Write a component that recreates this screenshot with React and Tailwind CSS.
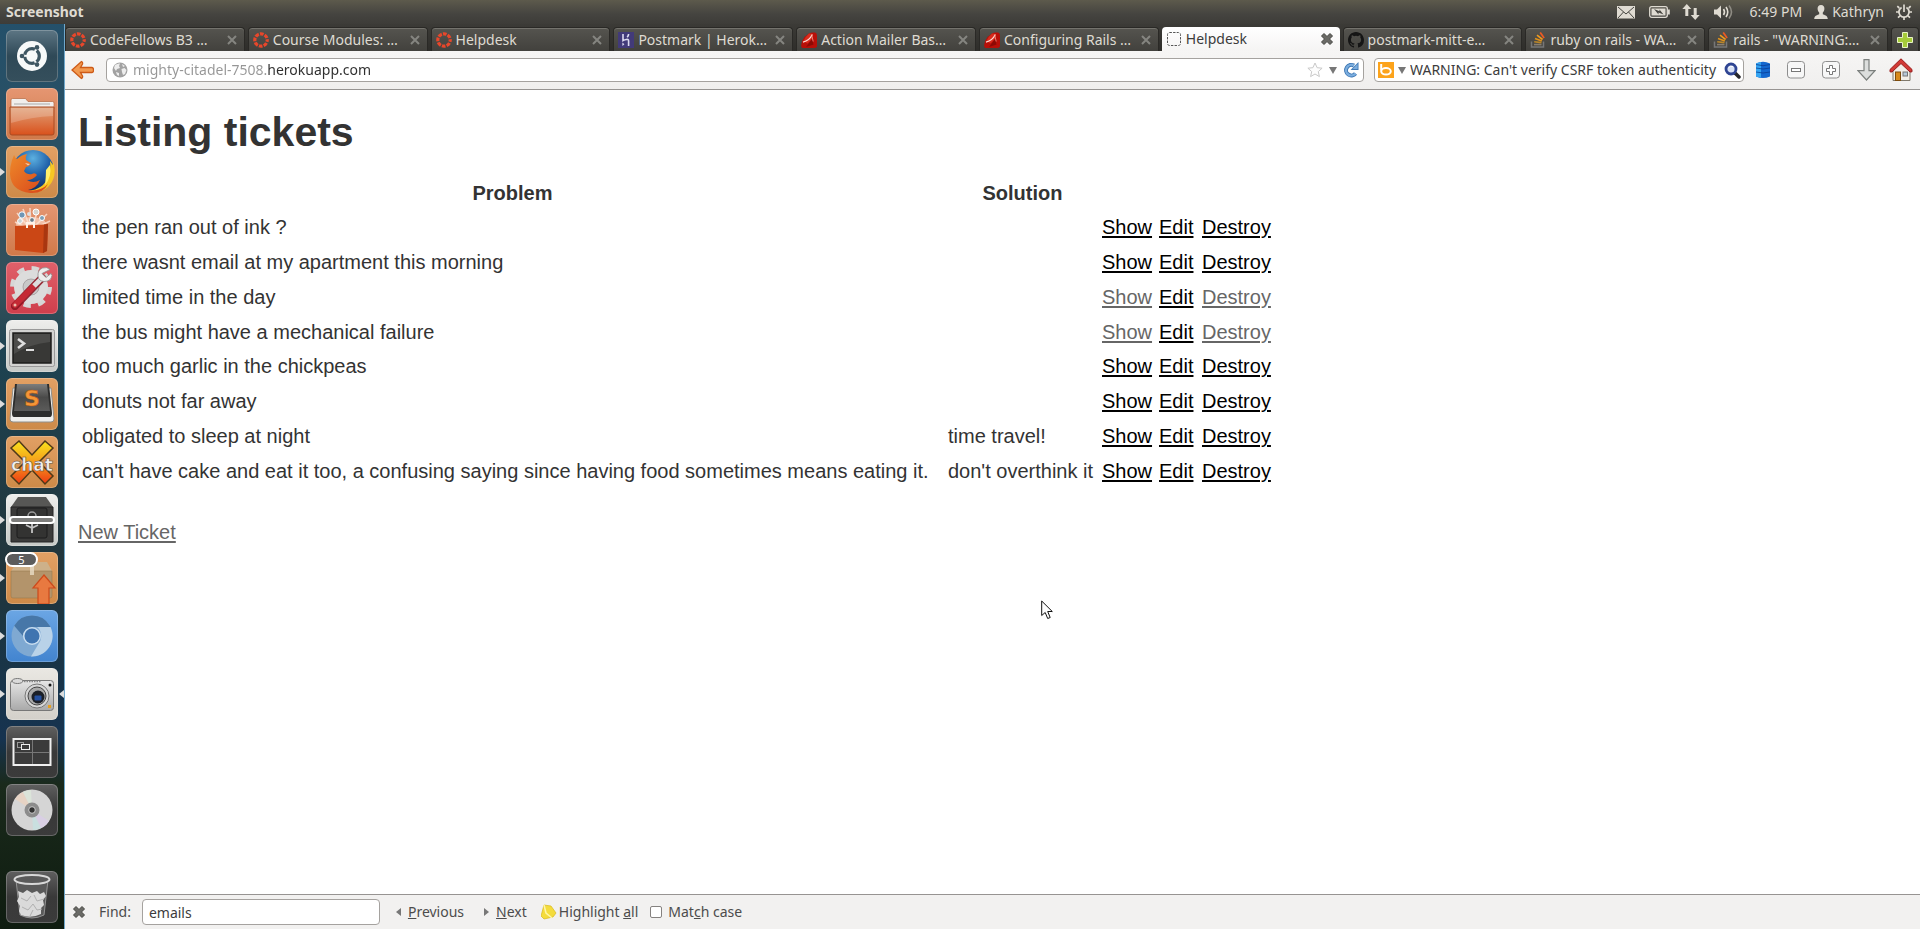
import React from "react";

const TICKETS = [
  { problem: "the pen ran out of ink ?", solution: "" },
  { problem: "there wasnt email at my apartment this morning", solution: "" },
  { problem: "limited time in the day", solution: "", visited: true },
  { problem: "the bus might have a mechanical failure", solution: "", visited: true },
  { problem: "too much garlic in the chickpeas", solution: "" },
  { problem: "donuts not far away", solution: "" },
  { problem: "obligated to sleep at night", solution: "time travel!" },
  {
    problem:
      "can't have cake and eat it too, a confusing saying since having food sometimes means eating it.",
    solution: "don't overthink it",
  },
];

/* ---------- tab icons ---------- */

function CanvasIcon() {
  return (
    <svg viewBox="0 0 16 16" className="size-4 shrink-0" aria-hidden="true">
      <circle cx="8" cy="8" r="6.2" fill="none" stroke="#e8472b" strokeWidth="3.2" strokeDasharray="3.7 1.17" strokeDashoffset="1.8" />
    </svg>
  );
}

function HerokuIcon() {
  return (
    <svg viewBox="0 0 16 16" className="size-4 shrink-0" aria-hidden="true">
      <rect width="16" height="16" fill="#423a79" />
      <path d="M5 2v6.600c1.400-.7 5.600-2.400 5.600.2V14M10.600 2c0 1.400-.7 2.400-1.400 3.200" fill="none" stroke="#dcdaf0" strokeWidth="1.600" />
      <path d="M4.400 10.500l2 1.700-2 1.700z" fill="#dcdaf0" />
    </svg>
  );
}

function RubyIcon() {
  return (
    <svg viewBox="0 0 16 16" className="size-4 shrink-0" aria-hidden="true">
      <path d="M8 1.500Q10 0 14 .5q2 .5 2 3v11q-1 1.500-3 1.500H2Q0 16 .2 13 1 8 3.500 5z" fill="#b80f08" />
      <path d="M8 1.500Q4 5 2.500 9l4 2.500 5-5 .5-4.500z" fill="#d92b1c" />
      <path d="M5 15l6-8 1.500 5.500z" fill="#8c0a05" />
      <path d="M2 10.200Q8.500 8.500 11.300 2.500" fill="none" stroke="#ffd9d3" strokeWidth="1.200" />
      <path d="M10.800 3.500l1.400 6" fill="none" stroke="#f0958a" strokeWidth=".8" />
    </svg>
  );
}

function BlankIcon() {
  return (
    <svg viewBox="0 0 16 16" className="size-4 shrink-0" aria-hidden="true">
      <rect x="1.500" y="1.500" width="13" height="13" rx="2" fill="none" stroke="#555" strokeDasharray="2.400 1.200" />
    </svg>
  );
}

function GithubIcon() {
  return (
    <svg viewBox="0 0 16 16" className="size-4 shrink-0" aria-hidden="true">
      <path
        fill="#151515"
        d="M8 0C3.580 0 0 3.580 0 8c0 3.540 2.290 6.530 5.470 7.590.4.070.55-.17.55-.38 0-.19-.01-.82-.01-1.490-2.010.37-2.530-.49-2.690-.94-.09-.23-.48-.94-.82-1.130-.28-.15-.68-.52-.01-.53.63-.01 1.080.58 1.230.82.72 1.210 1.870.87 2.330.66.070-.52.28-.87.51-1.070-1.780-.2-3.640-.89-3.640-3.950 0-.87.31-1.590.82-2.150-.08-.2-.36-1.020.08-2.120 0 0 .67-.21 2.200.82a7.600 7.600 0 0 1 4 0c1.530-1.040 2.200-.82 2.200-.82.44 1.100.16 1.920.08 2.120.51.56.82 1.270.82 2.150 0 3.070-1.870 3.750-3.650 3.950.29.25.54.73.54 1.480 0 1.070-.01 1.930-.01 2.200 0 .21.15.46.55.38A8.010 8.010 0 0 0 16 8c0-4.420-3.580-8-8-8z"
      />
    </svg>
  );
}

function StackIcon() {
  return (
    <svg viewBox="0 0 16 16" className="size-4 shrink-0" aria-hidden="true">
      <path d="M1.500 9.500v5.500h12V9.500" fill="none" stroke="#777" strokeWidth="1.500" />
      <path d="M4 12.600h7.500" stroke="#8a7f70" strokeWidth="1.600" />
      <path d="M4.200 9.700l7.300.9" stroke="#b8862a" strokeWidth="1.600" />
      <path d="M5 6.500l6.800 2.600" stroke="#e0921b" strokeWidth="1.600" />
      <path d="M7 3.200l5.600 4.300" stroke="#f09a1c" strokeWidth="1.600" />
      <path d="M10.200.4l3.900 5.700" stroke="#ee5a22" strokeWidth="1.700" />
    </svg>
  );
}

function CrossIcon({ color }) {
  return (
    <svg viewBox="0 0 12 12" className="size-3" aria-hidden="true">
      <path d="M2 2l8 8M10 2l-8 8" stroke={color} strokeWidth="2" />
    </svg>
  );
}

function HeavyCrossIcon() {
  return (
    <svg viewBox="0 0 14 14" className="size-3.5" aria-hidden="true">
      <path d="M4 1.500l3 3 3-3L12.500 4l-3 3 3 3L10 12.500l-3-3-3 3L1.500 10l3-3-3-3z" fill="#6a6a66" stroke="#444440" strokeWidth="1" />
    </svg>
  );
}

const TABS = [
  { icon: CanvasIcon, title: "CodeFellows B3 …" },
  { icon: CanvasIcon, title: "Course Modules: …" },
  { icon: CanvasIcon, title: "Helpdesk" },
  { icon: HerokuIcon, title: "Postmark | Herok…" },
  { icon: RubyIcon, title: "Action Mailer Bas…" },
  { icon: RubyIcon, title: "Configuring Rails …" },
  { icon: BlankIcon, title: "Helpdesk", active: true },
  { icon: GithubIcon, title: "postmark-mitt-e…" },
  { icon: StackIcon, title: "ruby on rails - WA…" },
  { icon: StackIcon, title: 'rails - "WARNING:…' },
];

function Tab({ icon: Icon, title, active }) {
  return (
    <div
      className={
        active
          ? "flex h-6 min-w-0 flex-1 items-center rounded-t bg-linear-to-b from-white to-[#f5f4f3] pr-1.5 pl-1 text-[#3c3c3c]"
          : "flex h-6 min-w-0 flex-1 items-center rounded-t border border-b-0 border-[#2a2926] bg-linear-to-b from-[#55544f] to-[#42413d] pr-1.5 pl-1 text-[#dfdbd2] shadow-[inset_0_1px_0_#74736d]"
      }
    >
      <button type="button" role="tab" aria-selected={!!active} className="flex min-w-0 flex-1 items-center gap-1">
        <Icon />
        <span className="overflow-hidden whitespace-nowrap">{title}</span>
      </button>
      <button type="button" aria-label={"Close " + title} className="shrink-0">
        {active ? <HeavyCrossIcon /> : <CrossIcon color="#858580" />}
      </button>
    </div>
  );
}

/* ---------- top panel ---------- */

function TopPanel() {
  return (
    <header className="flex h-7 items-start justify-between bg-linear-to-b from-[#5d5a4c] via-[#454440] to-[#3a3935] text-sm text-[#dfdbd2]">
      <span className="h-6 pl-1.5 leading-6 font-bold">Screenshot</span>
      <div className="flex h-6 items-center pr-2">
        <svg viewBox="0 0 18 14" className="mr-3.5 h-3.5 w-[18px]" aria-hidden="true">
          <rect y="1" width="18" height="12.500" fill="#dfdbd2" />
          <path d="M1 2l8 7 8-7M1 13l5.500-6M17 13l-5.500-6" fill="none" stroke="#45443f" strokeWidth="1" />
        </svg>
        <svg viewBox="0 0 21 14" className="mr-3 h-3.5 w-[21px]" aria-hidden="true">
          <rect x=".7" y="1.700" width="17.600" height="10.600" rx="2" fill="none" stroke="#dfdbd2" strokeWidth="1.300" />
          <rect x="2.500" y="3.500" width="14" height="7" fill="#dfdbd2" />
          <path d="M19 4.500h1.800v5H19z" fill="#dfdbd2" />
          <path d="M5 4l5.500 2.300V4.500l4 5-5-2v2z" fill="#45443f" />
        </svg>
        <svg viewBox="0 0 18 18" className="mr-3.5 size-[18px]" aria-hidden="true">
          <path d="M4.800 1l4.500 5H6.300v7H3.300V6H.3zM13.200 17l-4.500-5h3V5h3v7h3z" fill="#dfdbd2" />
        </svg>
        <svg viewBox="0 0 20 16" className="mr-4 h-4 w-5" aria-hidden="true">
          <path d="M0 5.500h3l4-4v13l-4-4H0z" fill="#dfdbd2" />
          <path d="M9.500 5q2 3 0 6M12 3q3.500 5 0 10" fill="none" stroke="#dfdbd2" strokeWidth="1.600" />
          <path d="M15 1.500q5 6.500 0 13" fill="none" stroke="#8f8c84" strokeWidth="1.600" />
        </svg>
        <time className="mr-3">6:49 PM</time>
        <svg viewBox="0 0 14 14" className="mr-1 size-3.5" aria-hidden="true">
          <path d="M7 0c2.500 0 3.600 1.700 3.400 4-.2 1.800-1 2.800-1.600 3.600v1.600c1.600.9 4.700 1 5 4.800H.2c.3-3.800 3.400-3.900 5-4.800V7.600C4.600 6.800 3.800 5.800 3.600 4 3.400 1.700 4.500 0 7 0z" fill="#dfdbd2" />
        </svg>
        <span className="mr-3">Kathryn</span>
        <svg viewBox="0 0 16 16" className="size-4" aria-hidden="true">
          <path d="M5.600 3.500a5.100 5.100 0 1 0 4.800 0" fill="none" stroke="#dfdbd2" strokeWidth="1.800" />
          <path d="M8 .5V8M1.300 2.200l2 1.800M14.700 2.200l-2 1.800M0 8h3M13 8h3M2 13.700l2-1.800M14 13.700l-2-1.800M8 13v3" stroke="#dfdbd2" strokeWidth="1.700" />
        </svg>
      </div>
    </header>
  );
}

/* ---------- launcher ---------- */

function UbuntuArt() {
  return (
    <>
      <circle cx="26" cy="26" r="15" fill="#f7f9f9" />
      <circle cx="26" cy="26" r="7.300" fill="none" stroke="#3e5662" strokeWidth="3.200" strokeDasharray="13.200 2.090" strokeDashoffset="6.600" />
      <circle cx="16" cy="26" r="2.300" fill="#3e5662" />
      <circle cx="31" cy="17.400" r="2.300" fill="#3e5662" />
      <circle cx="31" cy="34.600" r="2.300" fill="#3e5662" />
    </>
  );
}

function FilesArt() {
  return (
    <>
      <path d="M5 20v-8q0-1.500 1.500-1.500h13l2.500 3h24.500q1.500 0 1.500 1.500v6z" fill="#f1efed" stroke="#b5673f" strokeWidth=".7" />
      <path d="M8 16h36" stroke="#aaa" />
      <path d="M4 19h44v26q0 2-2 2H6q-2 0-2-2z" fill="url(#folder)" stroke="#a84a22" />
      <path d="M5 20h42v8Q25 29 5 35z" fill="#fff" opacity=".2" />
    </>
  );
}

function FirefoxArt() {
  return (
    <>
      <circle cx="27" cy="25" r="21" fill="url(#globe)" />
      <path d="M47 15q5 16-5 26-10 8-20 4 16-2 20-14 3-8 2-16l3 4z" fill="#f6c624" />
      <path d="M44 19q2 12-5 20 1-9 1-15z" fill="#fff06a" />
      <path d="M6 14q1-2 2-5 1 3 3 4 4-4 10-5-2 3-1 6 3 2 5 3-1 3-5 4l-2 4q3 4 8 3 3-2 5 1-4 5-10 5 6 4 13 0-3 8-12 10 12 2 20-6-5 10-18 9Q5 45 4 28q0-8 2-14z" fill="url(#fox)" />
      <path d="M19 17l5 1-2 1.500z" fill="#f4d0b0" />
    </>
  );
}

function SoftwareArt() {
  return (
    <>
      <path d="M25 26L11 9M25 26L17 5M25 26L24 4M25 26l7-20M25 26L41 10M25 26L9 18M25 26l19-9" stroke="#ffe6d8" strokeWidth="1.600" opacity=".75" />
      <ellipse cx="25" cy="20" rx="15" ry="7" fill="#ffe5d5" opacity=".6" />
      <circle cx="16" cy="11" r="3.200" fill="#6f96b5" stroke="#fff" />
      <circle cx="30" cy="8" r="3" fill="#d5d5cf" stroke="#fff" />
      <circle cx="23" cy="10" r="2" fill="#dfdfdf" />
      <circle cx="36" cy="14" r="2.500" fill="#7f9fb4" stroke="#fff" />
      <circle cx="14" cy="17" r="2.400" fill="#c8d0d0" stroke="#fff" />
      <circle cx="26" cy="16" r="2.400" fill="#697c86" stroke="#fff" />
      <path d="M9 22l29-1.500 4-.5-1 27-4 2-28-3z" fill="#cb4715" />
      <path d="M38 20.500l4-.5-1 27-4 2z" fill="#a93710" />
      <path d="M21 24v-5h7v5" fill="none" stroke="#fff1e6" strokeWidth="2" />
    </>
  );
}

function SettingsArt() {
  return (
    <>
      <circle cx="25" cy="25" r="18" fill="none" stroke="#d6d6d6" strokeWidth="6" strokeDasharray="7.070 7.070" />
      <circle cx="25" cy="25" r="12.500" fill="none" stroke="#dcdcdc" strokeWidth="9" />
      <circle cx="25" cy="25" r="8" fill="#c9c9c9" stroke="#a9a9a9" />
      <path d="M36 16L9 44" stroke="#8e1522" strokeWidth="8" strokeLinecap="round" opacity=".9" />
      <path d="M27 25L9 43" stroke="#c52a35" strokeWidth="6" strokeLinecap="round" />
      <path d="M28 24l8-8" stroke="#dcdcdc" strokeWidth="5" />
      <path d="M44 7.500q-3-3-7.500-1.500-5 2-4.500 8 .5 5 6 5.500 7 0 8-6l-1-2-5 4-4-4z" fill="#ededed" stroke="#8e8e8e" strokeWidth=".8" />
      <circle cx="9" cy="43" r="1.500" fill="#eba" />
    </>
  );
}

function TerminalArt() {
  return (
    <>
      <rect x="3.500" y="9.500" width="45" height="37" rx="2" fill="#d3d3d1" stroke="#999" />
      <rect x="7" y="13" width="38" height="30" fill="#383836" stroke="#1c1c1b" strokeWidth="1.500" />
      <path d="M8 14h36v8Q24 24 8 34z" fill="#fff" opacity=".1" />
      <path d="M12 19l6 4.500-6 4.500" fill="none" stroke="#dedede" strokeWidth="2.600" />
      <path d="M20 30h8" stroke="#dedede" strokeWidth="2" />
    </>
  );
}

function SublimeArt() {
  return (
    <>
      <path d="M7 10h38l3 31q0 3-3 3H7q-3 0-3-3z" fill="#efefed" stroke="#8f8f8b" />
      <path d="M9 6h34l3 29q0 4-2 4H8q-2 0-2-4z" fill="#2d2d2c" />
      <path d="M11 6h30l3 27H8z" fill="url(#key)" />
      <text x="26" y="28" textAnchor="middle" fontFamily="DejaVu Sans, sans-serif" fontWeight="bold" fontSize="22" fill="#f59537" stroke="#b95a10" strokeWidth=".5">
        S
      </text>
    </>
  );
}

function XChatArt() {
  return (
    <>
      <path d="M13 5l13 14L39 5l8 7-14 14 14 14-8 8-13-14-13 14-8-8 14-14L5 12z" fill="url(#xchat)" stroke="#4f3a18" strokeWidth="1.500" />
      <text x="26" y="35" textAnchor="middle" fontFamily="DejaVu Sans, sans-serif" fontWeight="bold" fontSize="17" fill="#efefef" stroke="#5a4630" strokeWidth=".5">
        chat
      </text>
    </>
  );
}

function SafeArt() {
  return (
    <>
      <path d="M12 3h28l7 10H5z" fill="#575755" />
      <path d="M5 13h42v35H5z" fill="#3b3b3a" stroke="#242424" />
      <rect x="11" y="14" width="30" height="30" rx="2" fill="#333332" stroke="#1c1c1c" />
      <circle cx="26" cy="22" r="4" fill="none" stroke="#9d9d9d" strokeWidth="1.500" />
      <path d="M26 30v9M20 31l6 3 6-3" fill="none" stroke="#c4c4c4" strokeWidth="1.800" />
      <rect x="4" y="23" width="44" height="6" rx="3" fill="#7d7d7b" stroke="#fff" strokeWidth="2" />
    </>
  );
}

function UpdaterArt() {
  return (
    <>
      <path d="M11 10h30l5 9H5z" fill="#cdb18a" />
      <path d="M5 19h41v25q0 2-2 2H7q-2 0-2-2z" fill="#b3946b" stroke="#98794f" strokeWidth=".6" />
      <path d="M24 10h4v13h-4z" fill="#e9dcc6" opacity=".8" />
      <path d="M38 23l11 13h-6v16H32V36h-5z" fill="#e87940" stroke="#cc4a1c" strokeWidth="1.200" />
    </>
  );
}

function ChromiumArt() {
  return (
    <>
      <circle cx="26" cy="26" r="20.500" fill="#7fa9d2" />
      <path d="M8.200 15.800A20.500 20.500 0 0 1 43.800 15.800L44.500 17H26a9 9 0 0 0-9 9z" fill="#4777a8" />
      <path d="M44.500 17A20.500 20.500 0 0 1 25 46.500L34.500 30.500Q37 22 31 17z" fill="#b9d2e8" />
      <circle cx="26" cy="26" r="9" fill="#c9ddef" />
      <circle cx="26" cy="26" r="7.500" fill="#3f74b0" />
    </>
  );
}

function CameraArt() {
  return (
    <>
      <rect x="4.500" y="12.500" width="43" height="30" rx="3" fill="url(#camera)" stroke="#777" />
      <ellipse cx="11.500" cy="13" rx="5.500" ry="2.500" fill="#dadada" stroke="#777" />
      <path d="M18 13.500h17" stroke="#888" strokeWidth="1.500" strokeDasharray="1.500 1" />
      <circle cx="44" cy="17" r="1.500" fill="#111" />
      <circle cx="31" cy="28" r="12" fill="#d6d6d6" stroke="#777" />
      <circle cx="31" cy="28" r="9" fill="#a8a8a8" stroke="#444" />
      <circle cx="32" cy="29" r="6.500" fill="#1b1f27" />
      <rect x="28.500" y="27.500" width="7" height="5" rx="1" fill="#244f9e" />
      <rect x="42" y="37" width="3" height="3" fill="#e8a020" />
    </>
  );
}

function WorkspaceArt() {
  return (
    <>
      <rect x="7.500" y="13" width="37" height="26" fill="#3b3b3b" stroke="#f0f0f0" strokeWidth="2" />
      <path d="M26.500 14v24M9 26.500h34" stroke="#777" />
      <rect x="11.500" y="16.500" width="6" height="5" fill="none" stroke="#999" />
      <rect x="15.500" y="18.500" width="8" height="5" fill="#3b3b3b" stroke="#eee" />
    </>
  );
}

function DiscArt() {
  return (
    <>
      <circle cx="26" cy="26" r="20.500" fill="#d5d5d5" />
      <path d="M26 26L9 15q3-5 8-7z" fill="#e6d3c4" />
      <path d="M26 26L17 8q4-2 8-2z" fill="#dbe4d9" />
      <path d="M26 26l17 11q-3 5-8 7z" fill="#d9cfe4" />
      <path d="M26 26l9 18q-4 2-8 2z" fill="#c9dfdf" />
      <circle cx="26" cy="26" r="7.500" fill="#8c8c8c" />
      <circle cx="26" cy="26" r="3.300" fill="#333" stroke="#ccc" strokeWidth="1" />
    </>
  );
}

function TrashArt() {
  return (
    <>
      <path d="M10 9l4 35q12 6 24 0l4-35z" fill="#5a5a5a" stroke="#a5a5a5" strokeWidth=".8" />
      <path d="M12 20l5 2 4-3 5 3 5-2 3 3 4-2 2 4-3 4 1 5-3 3v6q-10 5-20 1l-2-4 1-5-3-5 2-4z" fill="#dadada" />
      <path d="M15 27l6 3 4-5M28 24l3 6 7-2M16 36l6 3 5-6 4 6 5-1M24 45l3-6" fill="none" stroke="#b0b0b0" />
      <ellipse cx="26" cy="8.500" rx="17.500" ry="4.500" fill="#5a5a5a" stroke="#d8d8d8" strokeWidth="2" />
    </>
  );
}

const ORANGE = "bg-linear-to-b from-[#e59672] to-[#cf7949]";
const AMBER = "bg-linear-to-b from-[#e2a064] to-[#cd8a48]";
const PALE = "bg-linear-to-b from-[#eeeeec] to-[#c6c9c6]";
const DARK = "bg-linear-to-b from-[#606060] via-[#393939] to-[#3b3b3b]";

const APPS = [
  { name: "Dash", art: UbuntuArt, tile: "bg-linear-to-b from-[#5d7684] via-[#2f4957] to-[#354f5c]" },
  { name: "Files", art: FilesArt, tile: ORANGE },
  { name: "Firefox", art: FirefoxArt, tile: AMBER, running: true },
  { name: "Software Center", art: SoftwareArt, tile: ORANGE },
  { name: "System Settings", art: SettingsArt, tile: "bg-linear-to-b from-[#e0606a] to-[#cf3e4c]" },
  { name: "Terminal", art: TerminalArt, tile: PALE, running: true },
  { name: "Sublime Text", art: SublimeArt, tile: AMBER, running: true },
  { name: "XChat", art: XChatArt, tile: AMBER },
  { name: "Password Safe", art: SafeArt, tile: PALE, running: true },
  { name: "Software Updater", art: UpdaterArt, tile: AMBER, running: true, badge: "5" },
  { name: "Chromium", art: ChromiumArt, tile: "bg-linear-to-b from-[#6ba6e4] to-[#4284cf]", running: true },
  { name: "Screenshot", art: CameraArt, tile: "bg-linear-to-b from-[#eae8e3] to-[#d3d0ca]", running: true, focused: true },
  { name: "Workspace Switcher", art: WorkspaceArt, tile: DARK },
  { name: "Disc", art: DiscArt, tile: DARK },
];

function LauncherItem({ name, art: Art, tile, running, focused, badge }) {
  return (
    <li className="relative flex justify-center">
      <button type="button" aria-label={name} className={"size-13 rounded-md shadow-[inset_0_0_0_1px_rgba(255,255,255,0.22)] " + tile}>
        <svg viewBox="0 0 52 52" className="size-13" aria-hidden="true">
          <Art />
        </svg>
      </button>
      {running && (
        <svg viewBox="0 0 5 8" className="absolute top-[22px] left-0 h-2 w-[5px]" aria-hidden="true">
          <path d="M0 0l5 4-5 4z" fill="#dcdcdc" />
        </svg>
      )}
      {focused && (
        <svg viewBox="0 0 5 8" className="absolute top-[22px] right-0 h-2 w-[5px]" aria-hidden="true">
          <path d="M5 0L0 4l5 4z" fill="#dcdcdc" />
        </svg>
      )}
      {badge && (
        <span className="absolute top-0 left-[5px] w-[33px] rounded-full border-2 border-white bg-[#5c5c5c] text-center text-[11px] leading-[11px] text-white">
          {badge}
        </span>
      )}
    </li>
  );
}

function Launcher() {
  return (
    <nav
      aria-label="Launcher"
      className="flex w-[65px] shrink-0 flex-col justify-between border-r border-[#6fa8cc] bg-[linear-gradient(to_bottom,#24506a_0%,#34505a_30%,#1d4352_36%,#22353b_60%,#1b3542_66%,#163350_79%,#1a2a1c_84%,#0f1c10_100%)] pt-1.5 pb-1.5"
    >
      <svg className="absolute size-0" aria-hidden="true">
        <defs>
          <linearGradient id="folder" x2="0" y2="1">
            <stop stopColor="#e0a27a" />
            <stop offset="1" stopColor="#d9511c" />
          </linearGradient>
          <radialGradient id="globe" cx=".5" cy=".2" r=".8">
            <stop stopColor="#5cb0e0" />
            <stop offset=".5" stopColor="#1f5fa8" />
            <stop offset="1" stopColor="#0d2b5e" />
          </radialGradient>
          <linearGradient id="fox" x2="1" y2="1">
            <stop stopColor="#ee8a2a" />
            <stop offset="1" stopColor="#d8441a" />
          </linearGradient>
          <linearGradient id="key" x2="0" y2="1">
            <stop stopColor="#7d7d7c" />
            <stop offset=".5" stopColor="#4a4a49" />
            <stop offset="1" stopColor="#5b5b5a" />
          </linearGradient>
          <linearGradient id="xchat" x2="0" y2="1">
            <stop stopColor="#f9e31c" />
            <stop offset=".5" stopColor="#f59a1c" />
            <stop offset="1" stopColor="#ee3a14" />
          </linearGradient>
          <linearGradient id="camera" x2="0" y2="1">
            <stop stopColor="#e6e6e6" />
            <stop offset="1" stopColor="#a9a9a9" />
          </linearGradient>
        </defs>
      </svg>
      <ul className="flex flex-col gap-1.5">
        {APPS.map((app) => (
          <LauncherItem key={app.name} {...app} />
        ))}
      </ul>
      <ul>
        <LauncherItem name="Trash" art={TrashArt} tile={DARK} />
      </ul>
    </nav>
  );
}

/* ---------- browser chrome ---------- */

function Caret() {
  return (
    <svg viewBox="0 0 8 7" className="h-[7px] w-2" aria-hidden="true">
      <path d="M0 0h8L4 7z" fill="#777" />
    </svg>
  );
}

function TabStrip() {
  return (
    <div role="tablist" className="flex h-[27px] items-end gap-[3px] bg-linear-to-b from-[#3c3b37] to-[#2e2d2a] pr-px">
      {TABS.map((tab, i) => (
        <Tab key={i} {...tab} />
      ))}
      <button type="button" aria-label="New tab" className="flex h-6 w-7 shrink-0 items-center justify-center rounded-t border border-b-0 border-[#2a2926] bg-linear-to-b from-[#55544f] to-[#42413d]">
        <svg viewBox="0 0 16 16" className="size-4" aria-hidden="true">
          <path d="M5.500.500h5v5h5v5h-5v5h-5v-5h-5v-5h5z" fill="#a6cc3a" stroke="#e9f5c4" strokeWidth="1" />
        </svg>
      </button>
    </div>
  );
}

function Toolbar() {
  return (
    <div className="flex h-[39px] items-center border-b border-[#979492] bg-linear-to-b from-[#f6f5f4] to-[#f0efee] pr-[7px] pl-1.5 text-[#3c3c3c]">
      <button type="button" aria-label="Back" className="mr-3">
        <svg viewBox="0 0 23 20" className="h-5 w-[23px]" aria-hidden="true">
          <path d="M10.500 1.500q1.500.5 1 2.500L9.500 7.500H21q1.500 0 1.500 2.500T21 12.500H9.500l2 3.500q.5 2-1 2.500L1 10z" fill="#f29a50" stroke="#cd5a17" strokeWidth="1.300" />
        </svg>
      </button>
      <div className="flex h-6 min-w-0 flex-1 items-center rounded-sm border border-[#a5a29f] bg-white pr-1 pl-[5px]">
        <svg viewBox="0 0 16 16" className="mr-[5px] size-4 shrink-0" aria-hidden="true">
          <circle cx="8" cy="8" r="7.500" fill="#a2a2a2" />
          <path d="M3 3q3-2 5-1.500L7 4l1 2-3 1-1 2-2-3zM9.500 7l3-1 2 2-1.500 4-2 1-1-3zM4 10l3 1v3l-2-1zM10 2l3 2-2 1z" fill="#ededed" />
        </svg>
        <input
          type="text"
          aria-label="Address"
          defaultValue="mighty-citadel-7508.herokuapp.com"
          className="min-w-0 flex-1 bg-linear-to-r from-[#969696] from-[135px] to-[#2e2e2e] to-[135px] bg-clip-text text-transparent outline-none"
        />
        <button type="button" aria-label="Bookmark" className="mr-1.5">
          <svg viewBox="0 0 16 16" className="size-4" aria-hidden="true">
            <path d="M8 1l2.100 4.700 5 .5-3.800 3.400 1.100 5L8 12l-4.400 2.600 1.100-5L.9 6.200l5-.5z" fill="#fdfdfd" stroke="#c9c9c9" />
          </svg>
        </button>
        <button type="button" aria-label="History" className="mr-1.5"><Caret /></button>
        <button type="button" aria-label="Reload">
          <svg viewBox="0 0 16 16" className="size-4" aria-hidden="true">
            <path d="M12.500 11.500A5.300 5.300 0 1 1 11 3.600" fill="none" stroke="#3f78b4" strokeWidth="4" />
            <path d="M15.500 0v8h-8z" fill="#3f78b4" />
            <path d="M12.500 11.500A5.300 5.300 0 1 1 11 3.600" fill="none" stroke="#7badde" strokeWidth="2.200" />
            <path d="M14.600 2v5H9.600z" fill="#7badde" />
          </svg>
        </button>
      </div>
      <div className="mr-3 ml-2.5 flex h-6 w-[370px] items-center rounded-sm border border-[#a5a29f] bg-white pr-0.5 pl-[3px]">
        <button type="button" aria-label="Search engine" className="flex items-center gap-1">
          <svg viewBox="0 0 16 16" className="size-4" aria-hidden="true">
            <rect width="16" height="16" fill="#fca31b" />
            <path d="M3.200 2v6.500" stroke="#fff" strokeWidth="2" />
            <ellipse cx="8" cy="9.300" rx="4.800" ry="3.300" fill="none" stroke="#fff" strokeWidth="2" />
          </svg>
          <Caret />
        </button>
        <input
          type="text"
          aria-label="Search"
          defaultValue="WARNING: Can't verify CSRF token authenticity"
          className="ml-1 min-w-0 flex-1 bg-transparent outline-none"
        />
        <button type="button" aria-label="Search the web">
          <svg viewBox="0 0 17 17" className="size-[17px]" aria-hidden="true">
            <path d="M11 11l4 4" stroke="#26262b" strokeWidth="3.500" strokeLinecap="round" />
            <circle cx="7" cy="7" r="5" fill="#d9e2f5" stroke="#2f4593" strokeWidth="2.800" />
            <path d="M4.500 6Q6 3.500 9 4.500" fill="none" stroke="#fff" />
          </svg>
        </button>
      </div>
      <div className="flex items-center gap-[17px]">
        <button type="button" aria-label="Database">
          <svg viewBox="0 0 14 18" className="h-[18px] w-3.5" aria-hidden="true">
            <path d="M0 2.500Q7-1 14 2.500v13Q7 18.500 0 15.500z" fill="#1467cf" />
            <path d="M0 2.500Q4 1 5 1v15.500q-3 0-5-1z" fill="#35a5f2" />
            <path d="M0 3.500q7 2.500 14 0M0 7q7 2 14 0M0 11q7 2 14 0" fill="none" stroke="#0a3f94" strokeWidth=".8" />
          </svg>
        </button>
        <button type="button" aria-label="Zoom out">
          <svg viewBox="0 0 18 18" className="size-[18px]" aria-hidden="true">
            <rect x=".5" y=".5" width="17" height="16.500" rx="3" fill="#f7f7f7" stroke="#8e8e8e" />
            <rect x="4.500" y="7.500" width="9" height="3" fill="#fff" stroke="#777" />
          </svg>
        </button>
        <button type="button" aria-label="Zoom in">
          <svg viewBox="0 0 18 18" className="size-[18px]" aria-hidden="true">
            <rect x=".5" y=".5" width="17" height="16.500" rx="3" fill="#f7f7f7" stroke="#8e8e8e" />
            <path d="M7.500 4.500h3v3h3v3h-3v3h-3v-3h-3v-3h3z" fill="#fff" stroke="#777" />
          </svg>
        </button>
        <button type="button" aria-label="Downloads">
          <svg viewBox="0 0 19 22" className="h-[22px] w-[19px]" aria-hidden="true">
            <path d="M7 .7h5v11h6L9.500 21 1 11.700h6z" fill="#dcdedd" stroke="#7c807e" strokeWidth="1.200" />
          </svg>
        </button>
        <button type="button" aria-label="Home" className="-ml-1">
          <svg viewBox="0 0 24 24" className="size-6" aria-hidden="true">
            <path d="M4 11v11.500h17V11L12 4z" fill="#f2efe8" stroke="#80796c" />
            <rect x="6.500" y="14" width="5" height="8.500" fill="#d88a1c" stroke="#7f4c0c" />
            <rect x="14" y="14" width="4.500" height="4" fill="#b6c9d8" stroke="#777" />
            <path d="M12 .8L1 11.500v2.300L3 14l9-8.500 9 8.500 2-.2v-2.300z" fill="#d23a35" stroke="#991b1b" />
          </svg>
        </button>
      </div>
    </div>
  );
}

/* ---------- page ---------- */

function RowLink({ visited, children }) {
  return (
    <a
      href="#"
      className={visited ? "text-[#666666] underline decoration-2 underline-offset-2" : "text-black underline decoration-2 underline-offset-2"}
    >
      {children}
    </a>
  );
}

function TicketsPage() {
  return (
    <main className="flex-1 bg-white px-[13px] font-['Liberation_Sans',Arial,sans-serif] text-xl leading-7 text-[#333333]">
      <h1 className="pt-3.5 text-[41px] leading-[57px] font-bold">Listing tickets</h1>
      <table className="mt-3.5 h-[315px] table-fixed border-separate border-spacing-[3px]">
        <colgroup>
          <col className="w-[863px]" />
          <col className="w-[151px]" />
          <col className="w-[54px]" />
          <col className="w-10" />
          <col className="w-[72px]" />
        </colgroup>
        <thead>
          <tr>
            <th scope="col" className="p-px">Problem</th>
            <th scope="col" className="p-px">Solution</th>
            <th className="p-px" />
            <th className="p-px" />
            <th className="p-px" />
          </tr>
        </thead>
        <tbody className="whitespace-nowrap">
          {TICKETS.map((t) => (
            <tr key={t.problem}>
              <td className="p-px">{t.problem}</td>
              <td className="p-px">{t.solution}</td>
              <td className="p-px"><RowLink visited={t.visited}>Show</RowLink></td>
              <td className="p-px"><RowLink>Edit</RowLink></td>
              <td className="p-px"><RowLink visited={t.visited}>Destroy</RowLink></td>
            </tr>
          ))}
        </tbody>
      </table>
      <p className="mt-7"><RowLink visited>New Ticket</RowLink></p>
    </main>
  );
}

function FindBar() {
  return (
    <form className="flex h-[35px] items-center border-t border-[#979492] bg-[#f2f1f0] pl-[7px] text-[#4c4c4c]">
      <button type="button" aria-label="Close find bar" className="mr-[13px]"><HeavyCrossIcon /></button>
      <label htmlFor="find" className="mr-[11px]">Find:</label>
      <input
        id="find"
        type="text"
        defaultValue="emails"
        className="mr-4 h-[26px] w-[238px] rounded-sm border border-[#a5a29f] bg-white px-1.5 text-[#3c3c3c] outline-none"
      />
      <button type="button" className="mr-5 flex items-center gap-[7px]">
        <svg viewBox="0 0 5 8" className="h-2 w-[5px]" aria-hidden="true">
          <path d="M5 0L0 4l5 4z" fill="#777" />
        </svg>
        <span><u>P</u>revious</span>
      </button>
      <button type="button" className="mr-3.5 flex items-center gap-[7px]">
        <svg viewBox="0 0 5 8" className="h-2 w-[5px]" aria-hidden="true">
          <path d="M0 0l5 4-5 4z" fill="#777" />
        </svg>
        <span><u>N</u>ext</span>
      </button>
      <button type="button" className="mr-3 flex items-center gap-0.5">
        <svg viewBox="0 0 16 16" className="size-4" aria-hidden="true">
          <path d="M3 1l7 1 5 7-3 4-9 2-3-3z" fill="#f4dc3c" stroke="#d9b81c" strokeWidth=".7" />
          <path d="M3 1l2 8 6 5" fill="none" stroke="#fff6a8" strokeWidth="1.500" />
        </svg>
        <span>Highlight <u>a</u>ll</span>
      </button>
      <label className="flex items-center gap-1.5">
        <input type="checkbox" className="size-3 appearance-none rounded-xs border border-[#858280] bg-white" />
        <span>Mat<u>c</u>h case</span>
      </label>
    </form>
  );
}

export default function App() {
  return (
    <div className="flex min-h-screen flex-col font-['Noto_Sans','Open_Sans',sans-serif] text-sm">
      <TopPanel />
      <div className="-mt-1 flex flex-1">
        <Launcher />
        <div className="flex min-w-0 flex-1 flex-col">
          <TabStrip />
          <Toolbar />
          <TicketsPage />
          <FindBar />
        </div>
      </div>
      <svg viewBox="0 0 12 20" className="pointer-events-none absolute top-[600px] left-[1041px] h-5 w-3" aria-hidden="true">
        <path d="M.7 1v14.500l3.500-3 2.500 6 2.500-1-2.500-6h4.600z" fill="#fff" stroke="#111" strokeWidth="1" />
      </svg>
    </div>
  );
}
